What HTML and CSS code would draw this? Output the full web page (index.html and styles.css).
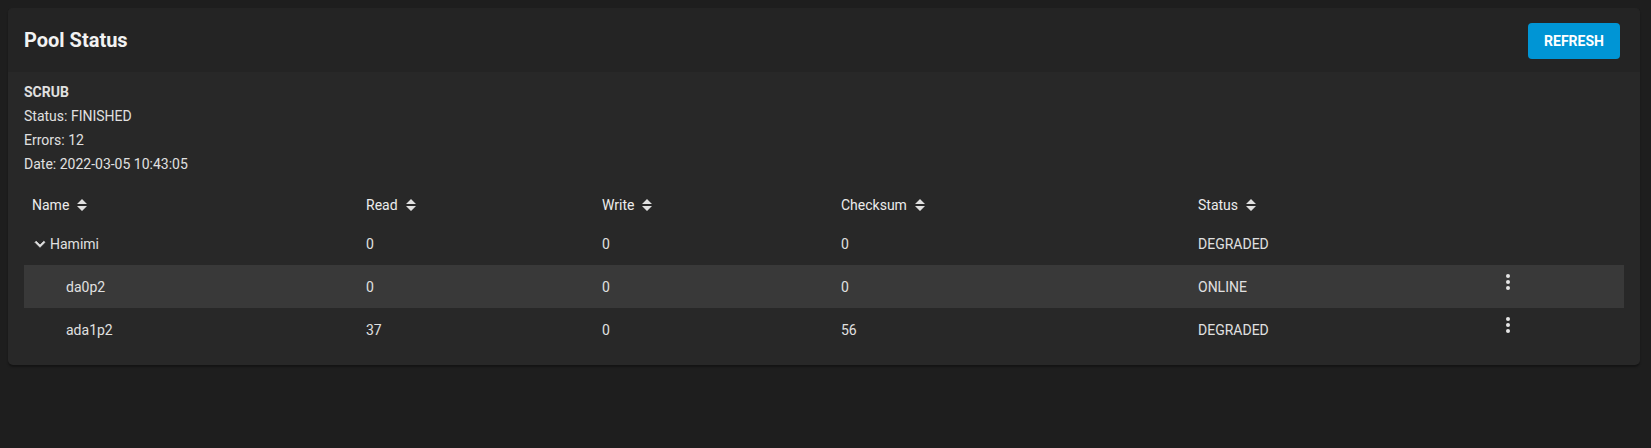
FILE: index.html
```html
<!DOCTYPE html>
<html lang="en">
<head>
<meta charset="utf-8">
<title>Pool Status</title>
<link rel="stylesheet" href="styles.css">
</head>
<body>
<div class="card">
  <div class="card-header">
    <h1 class="card-title">Pool Status</h1>
    <button class="btn-refresh">REFRESH</button>
  </div>
  <div class="card-body">
    <div class="scrub">
      <div class="scrub-title">SCRUB</div>
      <div class="scrub-line">Status: FINISHED</div>
      <div class="scrub-line">Errors: 12</div>
      <div class="scrub-line">Date: 2022-03-05 10:43:05</div>
    </div>
    <div class="table">
      <div class="row head">
        <div class="cell"><span>Name</span><svg class="sort" viewBox="0 0 10 12"><path d="M0 5 L5 0 L10 5 Z M0 7 L10 7 L5 12 Z"/></svg></div>
        <div class="cell"><span>Read</span><svg class="sort" viewBox="0 0 10 12"><path d="M0 5 L5 0 L10 5 Z M0 7 L10 7 L5 12 Z"/></svg></div>
        <div class="cell"><span>Write</span><svg class="sort" viewBox="0 0 10 12"><path d="M0 5 L5 0 L10 5 Z M0 7 L10 7 L5 12 Z"/></svg></div>
        <div class="cell"><span>Checksum</span><svg class="sort" viewBox="0 0 10 12"><path d="M0 5 L5 0 L10 5 Z M0 7 L10 7 L5 12 Z"/></svg></div>
        <div class="cell"><span>Status</span><svg class="sort" viewBox="0 0 10 12"><path d="M0 5 L5 0 L10 5 Z M0 7 L10 7 L5 12 Z"/></svg></div>
        <div class="cell"></div>
      </div>
      <div class="row">
        <div class="cell name"><svg class="chev" viewBox="0 0 24 24"><path d="M16.59 8.59L12 13.17 7.41 8.59 6 10l6 6 6-6z"/></svg><span>Hamimi</span></div>
        <div class="cell">0</div>
        <div class="cell">0</div>
        <div class="cell">0</div>
        <div class="cell">DEGRADED</div>
        <div class="cell"></div>
      </div>
      <div class="row hl">
        <div class="cell child">da0p2</div>
        <div class="cell">0</div>
        <div class="cell">0</div>
        <div class="cell">0</div>
        <div class="cell">ONLINE</div>
        <div class="cell act"><svg class="kebab" viewBox="0 0 24 24"><circle cx="12" cy="6" r="2"/><circle cx="12" cy="12" r="2"/><circle cx="12" cy="18" r="2"/></svg></div>
      </div>
      <div class="row">
        <div class="cell child">ada1p2</div>
        <div class="cell">37</div>
        <div class="cell">0</div>
        <div class="cell">56</div>
        <div class="cell">DEGRADED</div>
        <div class="cell act"><svg class="kebab" viewBox="0 0 24 24"><circle cx="12" cy="6" r="2"/><circle cx="12" cy="12" r="2"/><circle cx="12" cy="18" r="2"/></svg></div>
      </div>
    </div>
  </div>
</div>
</body>
</html>
```

FILE: styles.css
```css
html, body {
  margin: 0;
  padding: 0;
  background: #1e1e1e;
  font-family: Roboto, "Liberation Sans", sans-serif;
  color: #e0e0e0;
}
body {
  padding: 8px 11px 8px 8px;
}
.card {
  background: #282828;
  border-radius: 5px;
  overflow: hidden;
  box-shadow: 0 2px 2px rgba(0,0,0,0.35);
}
.card-header {
  height: 64px;
  background: #242424;
  display: flex;
  align-items: center;
  justify-content: space-between;
  padding: 0 20px 0 16px;
}
.card-title {
  margin: 0;
  font-size: 20px;
  font-weight: 700;
  color: #f2f2f2;
}
.btn-refresh {
  height: 36px;
  width: 92px;
  margin-top: 2px;
  border: none;
  border-radius: 4px;
  background: #0095d5;
  color: #ffffff;
  font-family: Roboto, "Liberation Sans", sans-serif;
  font-size: 14px;
  font-weight: 700;
  padding: 0;
}
.card-body {
  padding: 8px 16px 14px 16px;
}
.scrub {
  font-size: 14px;
  line-height: 24px;
  margin-bottom: 11px;
}
.scrub-title {
  font-weight: 700;
  font-size: 14px;
}
.table {
  font-size: 14px;
}
.row {
  display: grid;
  grid-template-columns: 334px 236px 239px 357px 300px 1fr;
  height: 43px;
  align-items: center;
}
.row.head {
  height: 35px;
  font-weight: 400;
  color: #ececec;
}
.row.hl {
  background: #393939;
}
.cell {
  padding-left: 8px;
  display: flex;
  align-items: center;
}
.sort {
  width: 10px;
  height: 12px;
  margin-left: 8px;
  fill: #e0e0e0;
}
.cell.name .chev {
  width: 20px;
  height: 20px;
  fill: #e0e0e0;
  stroke: #e0e0e0;
  stroke-width: 0.9;
  margin-left: -2px;
}
.cell.child {
  padding-left: 42px;
}
.cell.act {
  align-self: start;
  padding-left: 6px;
  padding-top: 5px;
}
.kebab {
  width: 24px;
  height: 24px;
  fill: #e6e6e6;
}
```
